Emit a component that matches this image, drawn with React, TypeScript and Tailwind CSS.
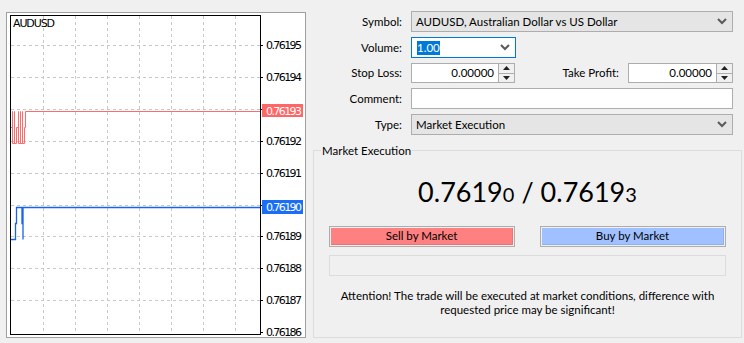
import React from 'react';

const font = { fontFamily: 'Lato, "Liberation Sans", sans-serif' };

const levels = ['0.76195', '0.76194', '0.76193', '0.76192', '0.76191', '0.76190', '0.76189', '0.76188', '0.76187', '0.76186'];
const gridX = [43, 75, 107, 139, 171, 203, 235];

function Chart() {
  return (
    <svg width={298} height={324} viewBox="7 13 298 324" className="block">
      <rect x={7} y={13} width={298} height={324} fill="#ffffff" />
      {gridX.map((x) => (
        <line key={x} x1={x + 0.5} y1={16} x2={x + 0.5} y2={334} stroke="#c8c8c8" strokeDasharray="3 3" />
      ))}
      {levels.map((l, i) => {
        const y = Math.round(45 + i * 31.9);
        return (
          <g key={l}>
            {i < 9 && <line x1={11} y1={y + 0.5} x2={260} y2={y + 0.5} stroke="#c8c8c8" strokeDasharray="3 3" />}
            <line x1={260} y1={y + 0.5} x2={263} y2={y + 0.5} stroke="#000" />
            {l !== '0.76193' && l !== '0.76190' && (
              <text x={266} y={Math.min(y + 4, 335.5)} fontSize={11} fill="#000" style={{ fontFamily: 'Tahoma, "DejaVu Sans", sans-serif' }} textLength={36}>
                {l}
              </text>
            )}
          </g>
        );
      })}
      <rect x={10.5} y={15.5} width={250} height={319} fill="none" stroke="#000" />
      <text x={13} y={27} fontSize={11} fill="#000" style={{ fontFamily: '"DejaVu Sans", sans-serif' }} textLength={42}>
        AUDUSD
      </text>
      {/* ask line */}
      <path
        d="M11,127.5 H12.5 V111.5 V143.5 H14.5 V111.5 V143.5 H16.5 V127.5 H18.5 V111.5 V143.5 H20.5 V111.5 V143.5 H22.5 V111.5 V143.5 H24.5 V127.5 H25.5 V111.5 H260"
        fill="none"
        stroke="#ff6a6a"
      />
      <rect x={262} y={104} width={41} height={13} fill="#ff6666" />
      <text x={266} y={114.5} fontSize={11} fill="#fff" style={{ fontFamily: 'Tahoma, "DejaVu Sans", sans-serif' }} textLength={36}>
        0.76193
      </text>
      {/* bid line */}
      <path
        d="M11,239.5 H15.5 V223.5 H16.5 V207.5 H22 V223.5 H23 V239.5 V207.5 H260"
        fill="none"
        stroke="#1464f0"
        strokeWidth={1.3}
      />
      <rect x={262} y={200} width={41} height={14} fill="#1a6ef5" />
      <text x={266} y={211} fontSize={11} fill="#fff" style={{ fontFamily: 'Tahoma, "DejaVu Sans", sans-serif' }} textLength={36}>
        0.76190
      </text>
    </svg>
  );
}

function Chevron() {
  return (
    <svg width={10} height={7} viewBox="0 0 10 7" className="shrink-0">
      <path d="M1,1 L5,5 L9,1" fill="none" stroke="#5a5a5a" strokeWidth={2} />
    </svg>
  );
}

function Spinner() {
  return (
    <div className="flex h-full w-[16px] shrink-0 flex-col border-l border-[#adadad] bg-[#f0f0f0]">
      <div className="flex flex-1 items-center justify-center border-b border-[#adadad]">
        <svg width={7} height={4} viewBox="0 0 7 4">
          <path d="M0,4 L3.5,0 L7,4 Z" fill="#202020" />
        </svg>
      </div>
      <div className="flex flex-1 items-center justify-center">
        <svg width={7} height={4} viewBox="0 0 7 4">
          <path d="M0,0 L3.5,4 L7,0 Z" fill="#202020" />
        </svg>
      </div>
    </div>
  );
}

function Label({ children }: { children: React.ReactNode }) {
  return <div className="w-[96px] shrink-0 text-right">{children}</div>;
}

export default function App() {
  return (
    <div className="flex h-[343px] w-[744px] bg-[#f0f0f0] text-[11.5px] text-black" style={font}>
      <div className="ml-[6px] mt-[12px] h-[326px] w-[300px] border border-[#a0a0a0]">
        <Chart />
      </div>

      <div className="flex w-[438px] flex-col">
        <div className="mt-[11px] flex flex-col gap-[5px]">
          <div className="flex h-[21px] items-center gap-[9px]">
            <Label>Symbol:</Label>
            <div className="flex h-full w-[322px] items-center justify-between border border-[#adadad] bg-[#e5e5e5] pl-[4px] pr-[5px]">
              <span>AUDUSD, Australian Dollar vs US Dollar</span>
              <Chevron />
            </div>
          </div>
          <div className="flex h-[21px] items-center gap-[9px]">
            <Label>Volume:</Label>
            <div className="flex h-full w-[105px] items-center justify-between border border-[#0078d7] bg-white pl-[5px] pr-[5px]">
              <span className="bg-[#0078d7] leading-[14px] text-white">1.00</span>
              <Chevron />
            </div>
          </div>
          <div className="flex h-[20px] items-center gap-[9px]">
            <Label>Stop Loss:</Label>
            <div className="flex h-full w-[104px] items-center border border-[#adadad] bg-white">
              <span className="flex-1 pr-[4px] text-right">0.00000</span>
              <Spinner />
            </div>
            <div className="w-[95px] text-right">Take Profit:</div>
            <div className="flex h-full w-[105px] items-center border border-[#adadad] bg-white">
              <span className="flex-1 pr-[4px] text-right">0.00000</span>
              <Spinner />
            </div>
          </div>
          <div className="flex h-[21px] items-center gap-[9px]">
            <Label>Comment:</Label>
            <div className="h-full w-[322px] border border-[#adadad] bg-white" />
          </div>
          <div className="flex h-[21px] items-center gap-[9px]">
            <Label>Type:</Label>
            <div className="flex h-full w-[322px] items-center justify-between border border-[#adadad] bg-[#e5e5e5] pl-[4px] pr-[5px]">
              <span>Market Execution</span>
              <Chevron />
            </div>
          </div>
        </div>

        <div className="relative ml-[7px] mt-[15px] flex h-[188px] w-[429px] flex-col items-center border border-[#dcdcdc]">
          <span className="absolute left-[7px] top-[-8px] bg-[#f0f0f0] px-[1px] leading-[15px]">Market Execution</span>
          <div className="mt-[25px] flex items-baseline text-[27px] leading-[32px]">
            <span>0.7619</span>
            <span className="text-[20px]">0</span>
            <span className="px-[7px]">/</span>
            <span>0.7619</span>
            <span className="text-[20px]">3</span>
          </div>
          <div className="mt-[16px] flex w-[397px] justify-between">
            <div className="h-[21px] w-[186px] border border-[#adadad] bg-[#f0f0f0] p-[1px]">
              <div className="flex h-full items-center justify-center border-b border-r border-[#e87474] bg-[#ff8080]">Sell by Market</div>
            </div>
            <div className="h-[21px] w-[186px] border border-[#adadad] bg-[#f0f0f0] p-[1px]">
              <div className="flex h-full items-center justify-center border-b border-r border-[#8fb0ee] bg-[#a0c0ff]">Buy by Market</div>
            </div>
          </div>
          <div className="mt-[8px] h-[21px] w-[397px] border border-[#dcdcdc] bg-[#f0f0f0]" />
          <div className="mt-[13px] text-center leading-[14px]">
            Attention! The trade will be executed at market conditions, difference with
            <br />
            requested price may be significant!
          </div>
        </div>
      </div>
    </div>
  );
}
